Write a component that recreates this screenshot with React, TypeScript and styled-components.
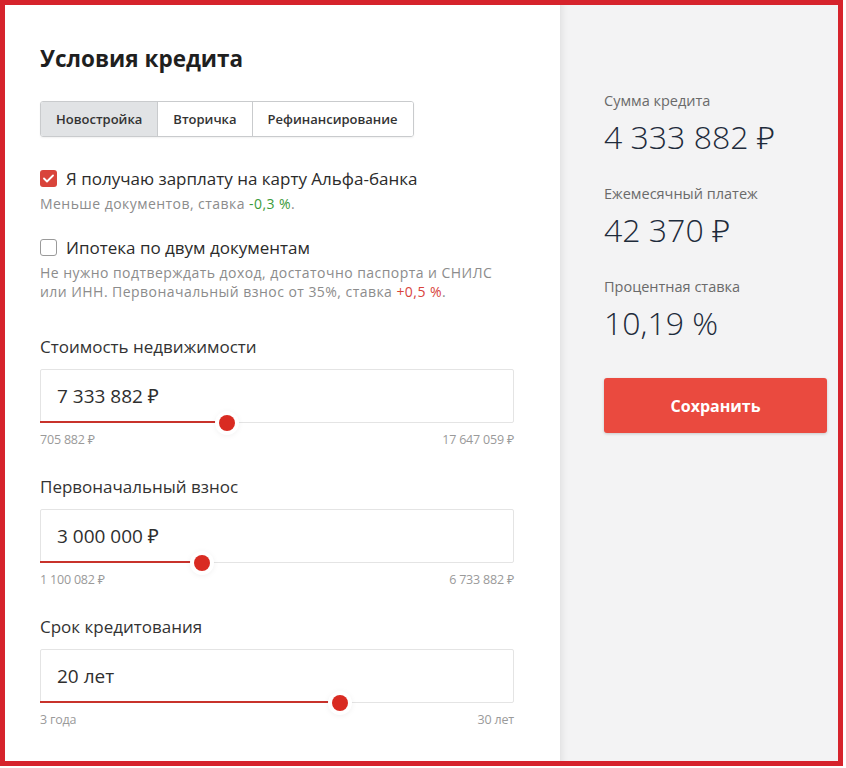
import React from "react"
import styled, { createGlobalStyle } from "styled-components"

const GlobalStyle = createGlobalStyle`
  html, body {
    margin: 0;
    padding: 0;
    background: #ffffff;
  }
  body {
    font-family: "Open Sans", "Noto Sans", "DejaVu Sans", sans-serif;
    color: #2b2b2b;
  }
  * {
    box-sizing: border-box;
  }
`

const Frame = styled.div`
  width: 843px;
  height: 766px;
  border: 5px solid #d6232c;
  display: grid;
  grid-template-columns: 555px 1fr;
  overflow: hidden;
`

const FormPanel = styled.section`
  background: #ffffff;
  padding: 40px 0 0 35px;
  display: flex;
  flex-direction: column;
`

const Title = styled.h1`
  margin: 0;
  font-size: 22.5px;
  line-height: 28px;
  font-weight: 700;
  color: #1f1f1f;
`

const Tabs = styled.div`
  margin-top: 28px;
  display: flex;
  align-self: flex-start;
  border: 1px solid #c9cbcd;
  border-radius: 3px;
  overflow: hidden;
  box-shadow: 0 1px 2px rgba(0, 0, 0, 0.06);
`

const Tab = styled.button<{ $active?: boolean }>`
  height: 34px;
  padding: 0 15px;
  border: none;
  border-left: 1px solid #c9cbcd;
  background: ${(p) => (p.$active ? "#e1e3e5" : "#ffffff")};
  font-family: inherit;
  font-size: 13px;
  font-weight: 600;
  color: #333;
  cursor: pointer;
  &:first-child {
    border-left: none;
  }
`

const CheckRow = styled.label<{ $first?: boolean }>`
  margin-top: ${(p) => (p.$first ? "29px" : "22px")};
  display: flex;
  align-items: center;
  gap: 9px;
  height: 24px;
  font-size: 17px;
  color: #2b2b2b;
`

const Box = styled.span<{ $checked?: boolean }>`
  width: 17px;
  height: 17px;
  flex-shrink: 0;
  border-radius: 3px;
  display: inline-flex;
  align-items: center;
  justify-content: center;
  background: ${(p) => (p.$checked ? "#d9443b" : "#ffffff")};
  border: ${(p) => (p.$checked ? "none" : "1.5px solid #9a9a9a")};
`

const Hint = styled.p`
  margin: 4px 0 0;
  font-size: 14px;
  letter-spacing: 0.45px;
  line-height: 19px;
  color: #8c8c8c;
`

const Good = styled.span`
  color: #3a9b3a;
`

const Bad = styled.span`
  color: #d8443b;
`

const Fields = styled.div`
  margin-top: 35px;
  display: flex;
  flex-direction: column;
  gap: 29px;
  width: 474px;
`

const Field = styled.div`
  display: flex;
  flex-direction: column;
`

const FieldLabel = styled.div`
  font-size: 17px;
  line-height: 22px;
  color: #333;
`

const InputBox = styled.div`
  position: relative;
  margin-top: 11px;
  height: 54px;
  border: 1px solid #e4e4e4;
  border-radius: 2px;
  display: flex;
  align-items: center;
  padding-left: 16px;
  font-size: 19px;
  color: #2f2f2f;
`

const Track = styled.div`
  position: absolute;
  left: -1px;
  bottom: -1px;
  height: 2px;
  background: #c8322b;
`

const Thumb = styled.div`
  position: absolute;
  bottom: -9px;
  width: 16px;
  height: 16px;
  margin-left: -8px;
  border-radius: 50%;
  background: #d92b22;
  box-shadow: 0 0 0 4px #ffffff, 0 1px 6px 3px rgba(0, 0, 0, 0.08);
`

const Range = styled.div`
  margin-top: 10px;
  display: flex;
  justify-content: space-between;
  font-size: 12.5px;
  letter-spacing: -0.2px;
  line-height: 14px;
  color: #9a9a9a;
`

const ResultPanel = styled.aside`
  background: #f3f3f4;
  box-shadow: inset 10px 0 10px -10px rgba(0, 0, 0, 0.12);
  padding: 87px 11px 0 44px;
  display: flex;
  flex-direction: column;
`

const Stat = styled.div`
  display: flex;
  flex-direction: column;
  margin-bottom: 28px;
`

const StatLabel = styled.div`
  font-size: 14.5px;
  line-height: 18px;
  color: #6a6a6a;
`

const StatValue = styled.div`
  margin-top: 7px;
  font-size: 32px;
  line-height: 40px;
  font-weight: 300;
  color: #1e2b3b;
`

const SaveButton = styled.button`
  margin-top: 7px;
  height: 55px;
  width: 223px;
  border: none;
  border-radius: 3px;
  background: #ea4a3f;
  color: #ffffff;
  font-family: inherit;
  font-size: 16px;
  font-weight: 700;
  box-shadow: 0 1px 3px rgba(0, 0, 0, 0.18);
  cursor: pointer;
`

function Check() {
  return (
    <svg width="11" height="9" viewBox="0 0 11 9" fill="none">
      <path d="M1 4.5L4 7.5L10 1.5" stroke="#fff" strokeWidth="1.8" strokeLinecap="round" strokeLinejoin="round" />
    </svg>
  )
}

type SliderField = {
  label: string
  value: string
  min: string
  max: string
  pos: number
}

const fields: SliderField[] = [
  { label: "Стоимость недвижимости", value: "7 333 882 ₽", min: "705 882 ₽", max: "17 647 059 ₽", pos: 39.5 },
  { label: "Первоначальный взнос", value: "3 000 000 ₽", min: "1 100 082 ₽", max: "6 733 882 ₽", pos: 34.2 },
  { label: "Срок кредитования", value: "20 лет", min: "3 года", max: "30 лет", pos: 63.3 },
]

const stats = [
  { label: "Сумма кредита", value: "4 333 882 ₽" },
  { label: "Ежемесячный платеж", value: "42 370 ₽" },
  { label: "Процентная ставка", value: "10,19 %" },
]

export default function App() {
  return (
    <>
      <GlobalStyle />
      <Frame>
        <FormPanel>
          <Title>Условия кредита</Title>
          <Tabs>
            <Tab $active>Новостройка</Tab>
            <Tab>Вторичка</Tab>
            <Tab>Рефинансирование</Tab>
          </Tabs>

          <CheckRow $first>
            <Box $checked>
              <Check />
            </Box>
            Я получаю зарплату на карту Альфа-банка
          </CheckRow>
          <Hint>
            Меньше документов, ставка <Good>-0,3 %</Good>.
          </Hint>

          <CheckRow>
            <Box />
            Ипотека по двум документам
          </CheckRow>
          <Hint>
            Не нужно подтверждать доход, достаточно паспорта и СНИЛС
            <br />
            или ИНН. Первоначальный взнос от 35%, ставка <Bad>+0,5 %</Bad>.
          </Hint>

          <Fields>
            {fields.map((f) => (
              <Field key={f.label}>
                <FieldLabel>{f.label}</FieldLabel>
                <InputBox>
                  {f.value}
                  <Track style={{ width: `${f.pos}%` }} />
                  <Thumb style={{ left: `${f.pos}%` }} />
                </InputBox>
                <Range>
                  <span>{f.min}</span>
                  <span>{f.max}</span>
                </Range>
              </Field>
            ))}
          </Fields>
        </FormPanel>

        <ResultPanel>
          {stats.map((s) => (
            <Stat key={s.label}>
              <StatLabel>{s.label}</StatLabel>
              <StatValue>{s.value}</StatValue>
            </Stat>
          ))}
          <SaveButton>Сохранить</SaveButton>
        </ResultPanel>
      </Frame>
    </>
  )
}
